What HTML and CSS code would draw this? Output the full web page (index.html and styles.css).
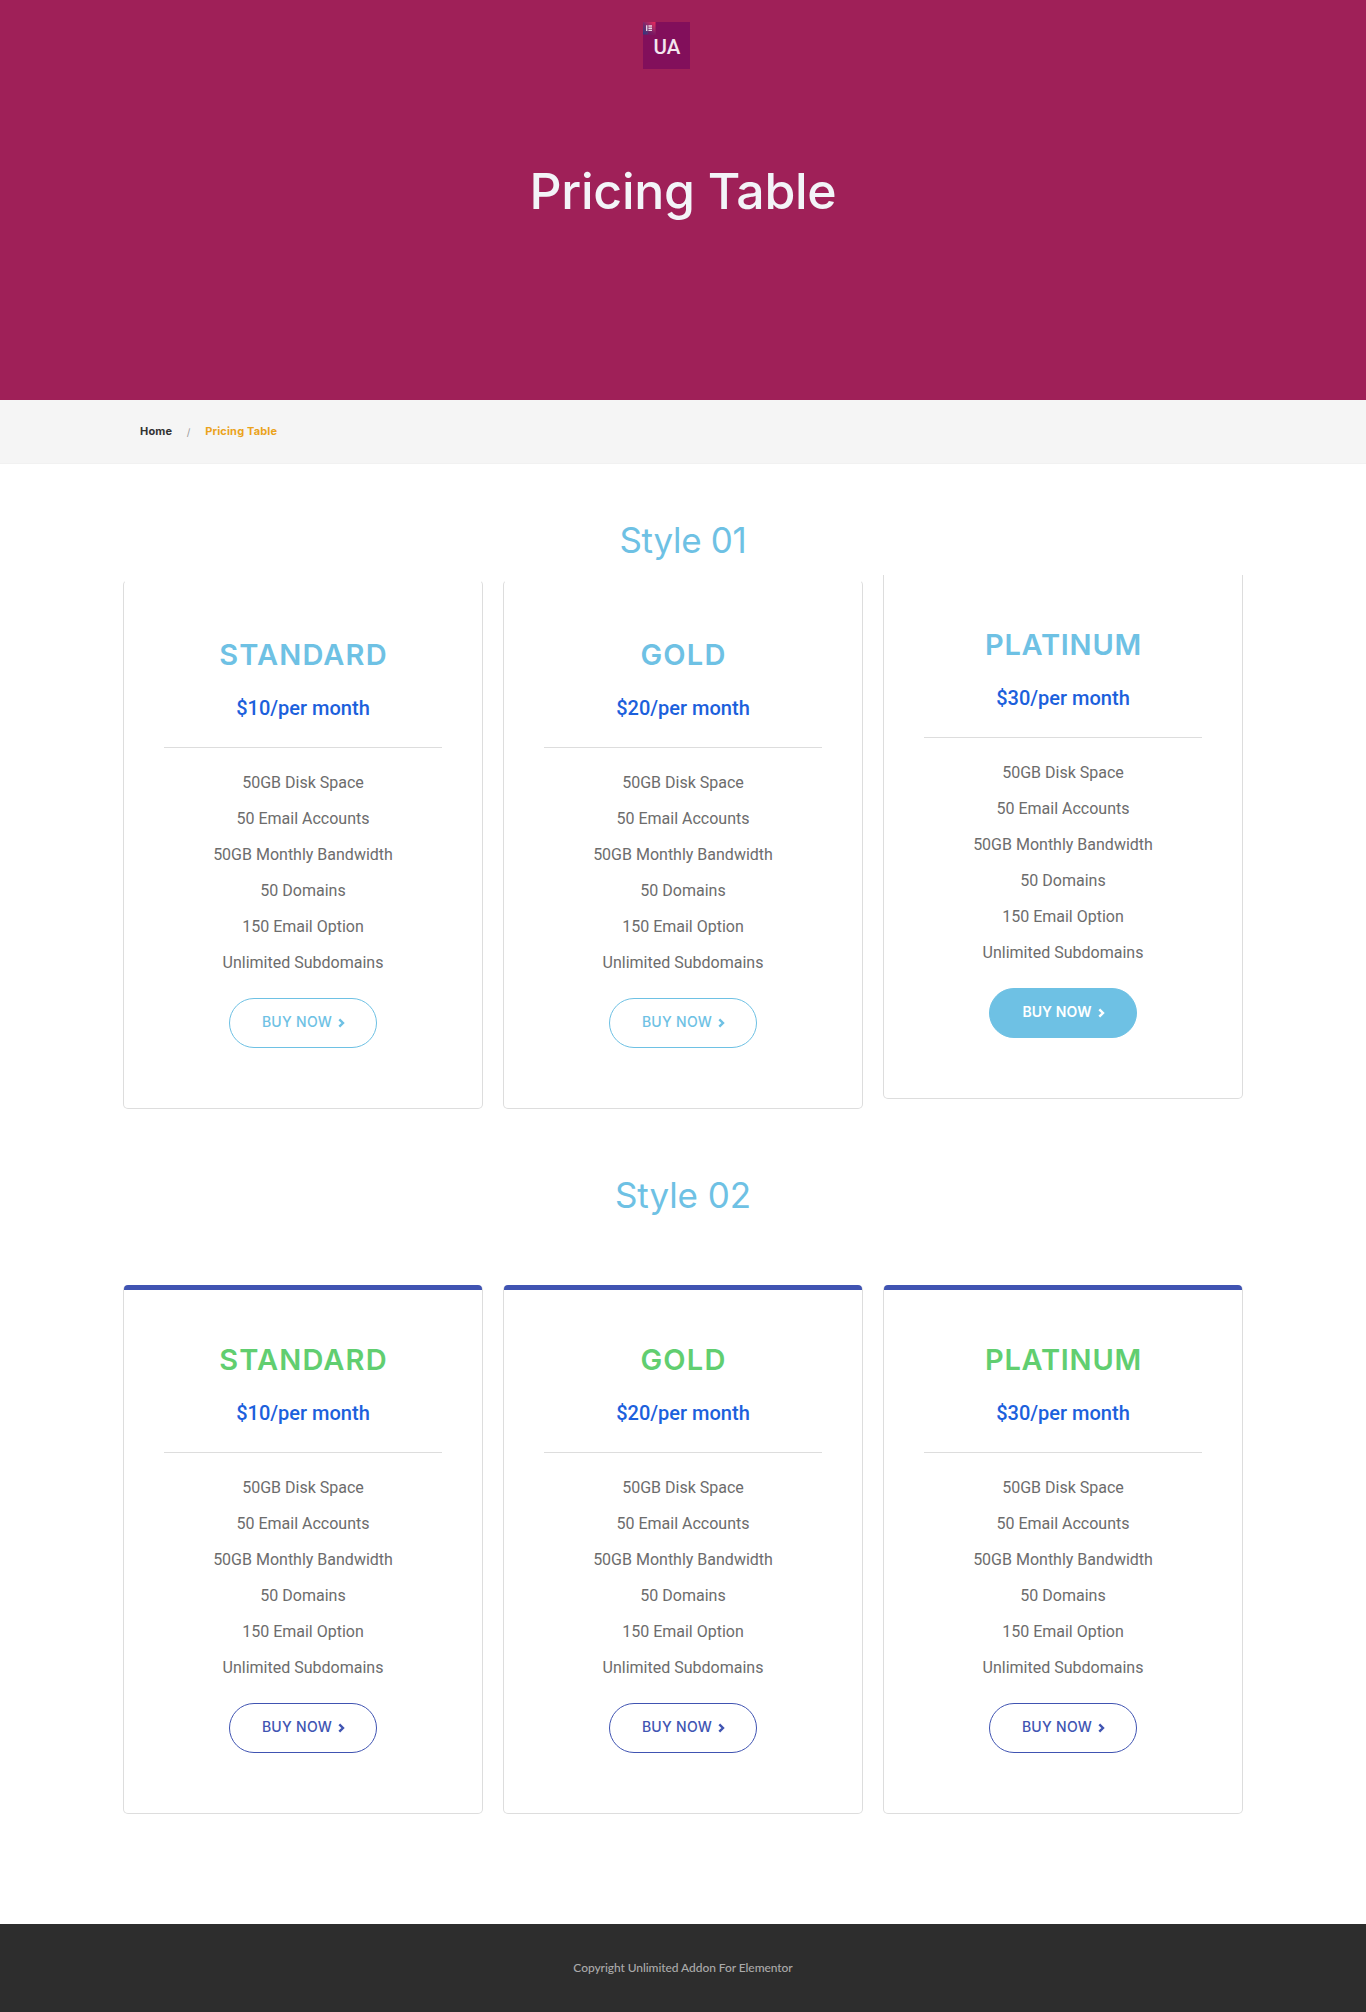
FILE: index.html
```html
<!DOCTYPE html>
<html lang="en">
<head>
<meta charset="utf-8">
<title>Pricing Table</title>
<link rel="stylesheet" href="styles.css">
</head>
<body>
<header class="hero">
  <a class="logo">
    <svg class="logo-mark" width="13" height="13" viewBox="0 0 13 13">
      <defs>
        <linearGradient id="mark" x1="0" y1="1" x2="1" y2="0">
          <stop offset="0" stop-color="#273a80"/><stop offset=".45" stop-color="#7a2a6c"/><stop offset="1" stop-color="#f0285a"/>
        </linearGradient>
        <linearGradient id="fade" x1="0" y1="0" x2="0" y2="1">
          <stop offset=".6" stop-color="#820f5b" stop-opacity="0"/><stop offset="1" stop-color="#820f5b" stop-opacity=".75"/>
        </linearGradient>
      </defs>
      <path fill="url(#mark)" d="M0 0h12.5v12.5H0z"/><path fill="url(#fade)" d="M5 0h7.5v12.5H5z"/>
      <path fill="#e6d5e2" d="M3 3.3h1.4v5.8H3zM5.4 3.3h3.6v1.4H5.4zM5.4 5.5h3.6v1.4H5.4zM5.4 7.7h3.6v1.4H5.4z"/>
    </svg>
    <span class="logo-text">UA</span>
  </a>
  <h1 class="hero-title">Pricing Table</h1>
</header>
<nav class="crumbs"><div class="crumbs-inner"><a class="crumb">Home</a><span class="crumb-sep">/</span><span class="crumb crumb-current">Pricing Table</span></div></nav>
<main>
  <h2 class="style-title style-title-1">Style 01</h2>
  <section class="plans plans-plain">
    <article class="plan"><h3 class="plan-name name-standard">STANDARD</h3><p class="price">$10/per month</p>
      <ul class="features"><li>50GB Disk Space</li><li>50 Email Accounts</li><li>50GB Monthly Bandwidth</li><li>50 Domains</li><li>150 Email Option</li><li>Unlimited Subdomains</li></ul>
      <a class="buy"><span>BUY NOW</span><svg class="chev" width="7" height="10" viewBox="0 0 7 10"><path d="M1.3 1.3 5 5 1.3 8.7"/></svg></a></article>
    <article class="plan"><h3 class="plan-name name-gold">GOLD</h3><p class="price">$20/per month</p>
      <ul class="features"><li>50GB Disk Space</li><li>50 Email Accounts</li><li>50GB Monthly Bandwidth</li><li>50 Domains</li><li>150 Email Option</li><li>Unlimited Subdomains</li></ul>
      <a class="buy"><span>BUY NOW</span><svg class="chev" width="7" height="10" viewBox="0 0 7 10"><path d="M1.3 1.3 5 5 1.3 8.7"/></svg></a></article>
    <article class="plan plan-raised"><h3 class="plan-name name-platinum">PLATINUM</h3><p class="price">$30/per month</p>
      <ul class="features"><li>50GB Disk Space</li><li>50 Email Accounts</li><li>50GB Monthly Bandwidth</li><li>50 Domains</li><li>150 Email Option</li><li>Unlimited Subdomains</li></ul>
      <a class="buy buy-filled"><span>BUY NOW</span><svg class="chev" width="7" height="10" viewBox="0 0 7 10"><path d="M1.3 1.3 5 5 1.3 8.7"/></svg></a></article>
  </section>
  <h2 class="style-title style-title-2">Style 02</h2>
  <section class="plans plans-bar">
    <article class="plan"><h3 class="plan-name name-standard">STANDARD</h3><p class="price">$10/per month</p>
      <ul class="features"><li>50GB Disk Space</li><li>50 Email Accounts</li><li>50GB Monthly Bandwidth</li><li>50 Domains</li><li>150 Email Option</li><li>Unlimited Subdomains</li></ul>
      <a class="buy"><span>BUY NOW</span><svg class="chev" width="7" height="10" viewBox="0 0 7 10"><path d="M1.3 1.3 5 5 1.3 8.7"/></svg></a></article>
    <article class="plan"><h3 class="plan-name name-gold">GOLD</h3><p class="price">$20/per month</p>
      <ul class="features"><li>50GB Disk Space</li><li>50 Email Accounts</li><li>50GB Monthly Bandwidth</li><li>50 Domains</li><li>150 Email Option</li><li>Unlimited Subdomains</li></ul>
      <a class="buy"><span>BUY NOW</span><svg class="chev" width="7" height="10" viewBox="0 0 7 10"><path d="M1.3 1.3 5 5 1.3 8.7"/></svg></a></article>
    <article class="plan"><h3 class="plan-name name-platinum">PLATINUM</h3><p class="price">$30/per month</p>
      <ul class="features"><li>50GB Disk Space</li><li>50 Email Accounts</li><li>50GB Monthly Bandwidth</li><li>50 Domains</li><li>150 Email Option</li><li>Unlimited Subdomains</li></ul>
      <a class="buy"><span>BUY NOW</span><svg class="chev" width="7" height="10" viewBox="0 0 7 10"><path d="M1.3 1.3 5 5 1.3 8.7"/></svg></a></article>
  </section>
</main>
<footer class="footer">Copyright Unlimited Addon For Elementor</footer>
</body>
</html>
```
FILE: styles.css
```css
* { box-sizing: border-box; }
body { margin: 0; background: #fff; font-family: Roboto, sans-serif; color: #6c6c6c; }
h1, h2, h3, p, ul { margin: 0; padding: 0; }

.hero { height: 400px; padding-top: 22px; background: #9f2058; }
.logo { position: relative; display: flex; align-items: center; justify-content: center; width: 47px; height: 47px; margin-left: 643px; background: #820f5b; }
.logo-mark { position: absolute; left: 0; top: 0; }
.logo-text { padding-top: 3px; padding-left: 1px; font-size: 20.5px; line-height: 24px; font-weight: 500; color: #f3e6ef; }
.hero-title { margin-top: 92px; text-align: center; font: 500 50px/60px Inter, sans-serif; letter-spacing: -0.3px; color: #f3f4f8; }

.crumbs { height: 64px; background: #f5f5f5; border-bottom: 1px solid #f1f1f1; }
.crumbs-inner { display: flex; align-items: center; width: 1120px; height: 62px; margin: 0 auto; padding-left: 17px; font: 700 11px/16px Inter, sans-serif; letter-spacing: 0.16px; }
.crumb { color: #333; }
.crumb-sep { width: 33px; padding-top: 1px; text-align: center; font-weight: 400; font-size: 10px; color: #999; }
.crumb-current { color: #eba31c; }

.style-title { text-align: center; font: 400 35px/44px Inter, sans-serif; color: #6ec1e4; }
.style-title-1 { padding-top: 54px; letter-spacing: -0.3px; }
.style-title-2 { padding-top: 64px; letter-spacing: -0.05px; }

.plans { display: grid; grid-template-columns: repeat(3, 360px); gap: 20px; justify-content: center; }
.plans-plain { margin-top: 18px; }
.plans-bar { margin-top: 68px; }
.plan { position: relative; display: flex; flex-direction: column; align-items: center; height: 529px; padding: 52px 40px 0; border: 1px solid #ddd; border-top-color: transparent; border-radius: 5px; background: #fff; background-clip: padding-box; text-align: center; }
.plan-raised { top: -10px; clip-path: inset(5px 0 0 0); }
.plans-bar .plan::before { content: ""; position: absolute; left: 0; right: 0; top: -1px; height: 5px; border-radius: 4px 4px 0 0; background: #4054b2; }
.plan-name { font: 600 29px/44px Inter, sans-serif; color: #6ec1e4; }
.name-standard { letter-spacing: 1.15px; margin-right: -1px; }
.name-gold { letter-spacing: 1.2px; margin-right: -1px; }
.name-platinum { letter-spacing: 0.75px; margin-right: -1px; }
.plans-bar .plan-name { color: #61ce70; }
.price { width: 100%; height: 71px; padding-top: 17px; border-bottom: 1px solid #ddd; font-size: 20px; line-height: 28px; font-weight: 500; color: #1c60dc; }
.features { padding-top: 17px; list-style: none; font-size: 16px; line-height: 36px; }
.buy { display: flex; align-items: center; justify-content: center; gap: 6px; width: 148px; height: 50px; margin-top: 17px; padding: 0 0 2px 1px; border: 1px solid currentColor; border-radius: 25px; font: 500 14px/20px Inter, sans-serif; letter-spacing: 0.28px; color: #6ec1e4; }
.plans-bar .buy { color: #4054b2; }
.buy.buy-filled { background: #6ec1e4; border-color: #6ec1e4; color: #fff; font-weight: 600; letter-spacing: 0.1px; }
.chev { fill: none; stroke: currentColor; stroke-width: 2.4; margin-top: 2px; }

.footer { height: 88px; margin-top: 110px; text-align: center; background: #2d2d2d; font: 500 12px/88px Lato, sans-serif; letter-spacing: -0.07px; color: #aaa; }
```
